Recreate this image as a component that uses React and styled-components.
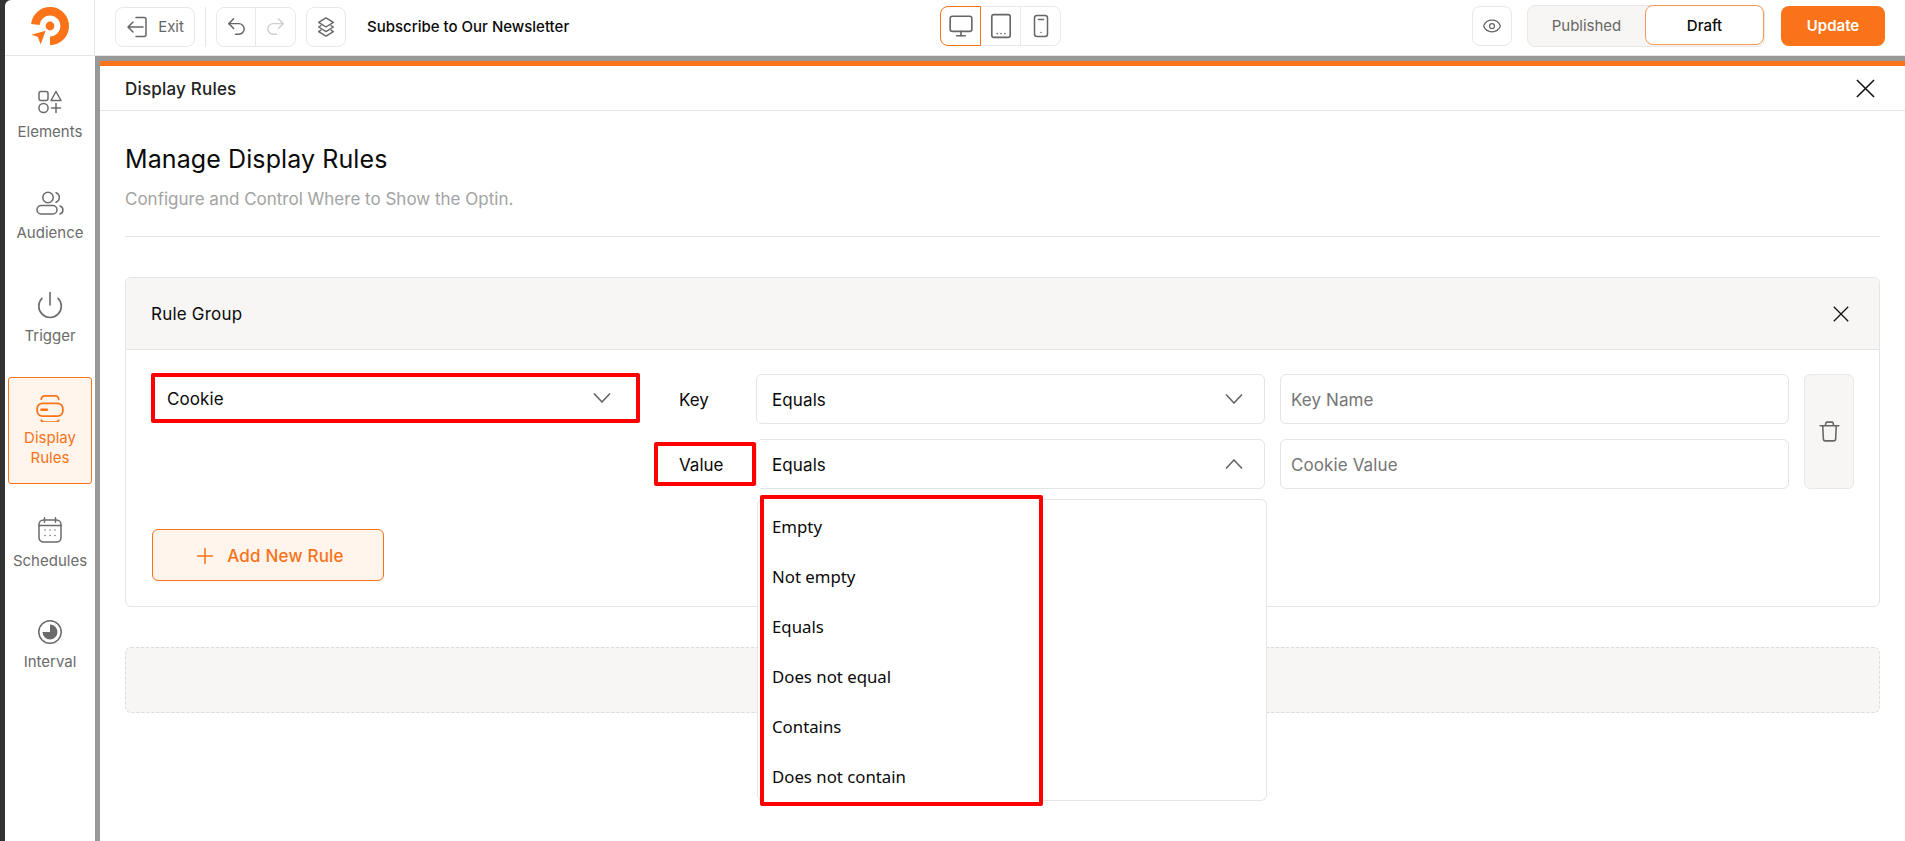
import React from 'react';
import styled, { createGlobalStyle } from 'styled-components';
import { Undo2, Redo2, Monitor, Eye, Power, Plus } from 'lucide-react';

const GlobalStyle = createGlobalStyle`
  html, body { margin: 0; padding: 0; background: #333; }
  body { font-family: Inter, "Liberation Sans", sans-serif; color: #0a0a0a; }
  * { box-sizing: border-box; }
`;

const Shell = styled.div`
  height: 100vh;
  padding-left: 5px;
  background: #333;
  overflow: hidden;
`;

const AppFrame = styled.div`
  height: 100%;
  display: flex;
  flex-direction: column;
  background: #fff;
  border-top-left-radius: 6px;
`;

const Header = styled.header`
  height: 56px;
  flex: none;
  display: flex;
  align-items: flex-start;
  padding-right: 20px;
  border-bottom: 1px solid #e5e5e5;
`;

const LogoCell = styled.div`
  width: 90px;
  height: 55px;
  flex: none;
  display: flex;
  justify-content: center;
  padding-top: 6px;
  border-right: 1px solid #e5e5e5;
`;

const LeftTools = styled.div`
  width: 845px;
  flex: none;
  display: flex;
  align-items: center;
  gap: 10px;
  padding: 6px 0 0 20px;
`;

const ToolButton = styled.button`
  height: 40px;
  width: ${p => p.$width || 40}px;
  display: flex;
  align-items: center;
  justify-content: center;
  gap: 8px;
  padding: 0;
  background: #fff;
  border: 1px solid #e8e8e8;
  border-radius: 8px;
  color: #666;
  font: 400 15px Inter, sans-serif;
`;

const Separator = styled.div`
  width: 1px;
  height: 40px;
  background: #e5e5e5;
`;

const ButtonGroup = styled.div`
  height: 40px;
  display: flex;
  border: 1px solid #e8e8e8;
  border-radius: 8px;
`;

const GroupItem = styled.button`
  width: ${p => p.$width || 39}px;
  display: flex;
  align-items: center;
  justify-content: center;
  padding: 0;
  background: #fff;
  color: ${p => (p.$muted ? '#cfcfcf' : '#666')};
  border: none;
  border-right: 1px solid #e8e8e8;
  border-radius: 0;
  &:last-child { border-right: none; border-radius: 0 8px 8px 0; }
  &:first-child { border-radius: 8px 0 0 8px; }
  ${p => p.$active && `
    margin: -1px 0 -1px -1px;
    width: ${(p.$width || 39) + 2}px;
    border: 1px solid #fa7319;
  `}
`;

const PageTitle = styled.div`
  margin-left: 11px;
  padding-top: 1px;
  font-size: 15px;
  font-weight: 500;
  line-height: 40px;
`;

const DeviceWrap = styled.div`
  padding-top: 6px;
`;

const RightTools = styled.div`
  margin-left: auto;
  display: flex;
  align-items: flex-start;
  padding-top: 6px;
`;

const Segment = styled.div`
  width: 238px;
  height: 42px;
  margin: -1px 0 0 15px;
  display: flex;
  background: #f7f6f4;
  border: 1px solid #e8e8e8;
  border-radius: 8px;
`;

const SegmentItem = styled.div`
  flex: ${p => (p.$active ? '0 0 119px' : '1')};
  height: ${p => (p.$active ? '40px' : 'auto')};
  margin-top: ${p => (p.$active ? '-1px' : '0')};
  display: flex;
  align-items: center;
  justify-content: center;
  padding-bottom: ${p => (p.$active ? 0 : 2)}px;
  font-size: 15px;
  font-weight: ${p => (p.$active ? 500 : 400)};
  color: ${p => (p.$active ? '#0a0a0a' : '#666')};
  background: ${p => (p.$active ? '#fff' : 'transparent')};
  border: ${p => (p.$active ? '1px solid #fa9a56' : 'none')};
  border-radius: 8px;
`;

const UpdateButton = styled.button`
  width: 104px;
  height: 40px;
  margin-left: 16px;
  padding: 0 0 2px;
  background: #fa7319;
  border: none;
  border-radius: 8px;
  color: #fff;
  font: 600 15px Inter, sans-serif;
`;

const Body = styled.div`
  flex: 1;
  min-height: 0;
  display: flex;
`;

const Sidebar = styled.nav`
  width: 90px;
  flex: none;
  display: flex;
  flex-direction: column;
  gap: 17px;
  padding: 18px 3px 0;
`;

const NavItem = styled.div`
  display: flex;
  flex-direction: column;
  align-items: center;
  padding: ${p => (p.$active ? '16px 0 15px' : '16px 0')};
  margin-top: ${p => (p.$active ? '-2px' : '0')};
  text-align: center;
  font-size: 15px;
  line-height: 20px;
  color: ${p => (p.$active ? '#fa7319' : '#6b6b6b')};
  background: ${p => (p.$active ? '#fff5ec' : 'transparent')};
  border: ${p => (p.$active ? '1px solid #fa7319' : 'none')};
  border-radius: 3px;
  svg { display: block; margin-bottom: ${p => (p.$active ? 6 : 8)}px; }
`;

const TriggerIcon = styled(Power)`
  && { margin: -2px 0 6px; }
`;

const Main = styled.main`
  flex: 1;
  min-width: 0;
  padding: 5px 0 0 5px;
  background: #999;
`;

const Modal = styled.section`
  height: 100%;
  background: #fff;
  border-top: 5px solid #fa7319;
`;

const ModalHeader = styled.div`
  height: 45px;
  display: flex;
  align-items: center;
  justify-content: space-between;
  padding: 0 30px 0 25px;
  border-bottom: 1px solid #e5e5e5;
`;

const ModalTitle = styled.div`
  padding-top: 2px;
  font-size: 17px;
  font-weight: 500;
  letter-spacing: 0.2px;
  color: #222;
`;

const CloseButton = styled.span`
  display: flex;
  color: #111;
`;

const Content = styled.div`
  padding: 31px 25px 0;
`;

const Heading = styled.h2`
  margin: 0;
  font-size: 25px;
  font-weight: 400;
  line-height: 34px;
  letter-spacing: 0.1px;
`;

const SubHeading = styled.p`
  margin: 11px 0 0;
  font-size: 17px;
  line-height: 24px;
  color: #a3a3a3;
`;

const Divider = styled.hr`
  margin: 25px 0 40px;
  border: none;
  border-top: 1px solid #e5e5e5;
`;

const RuleGroup = styled.div`
  border: 1px solid #e5e5e5;
  border-radius: 6px;
`;

const GroupHeader = styled.div`
  height: 72px;
  display: flex;
  align-items: center;
  justify-content: space-between;
  padding: 0 30px 0 25px;
  background: #f7f6f4;
  border-bottom: 1px solid #e5e5e5;
  border-radius: 6px 6px 0 0;
  font-size: 17px;
  font-weight: 400;
  letter-spacing: 0.2px;
`;

const GroupBody = styled.div`
  padding: 24px 26px 25px;
`;

const RuleRow = styled.div`
  display: flex;
  align-items: stretch;
`;

const LeftCol = styled.div`
  width: 487px;
  flex: none;
`;

const Conditions = styled.div`
  margin-left: 15px;
  display: flex;
  flex-direction: column;
  gap: 15px;
`;

const ConditionRow = styled.div`
  display: flex;
  align-items: center;
`;

const KeyLabel = styled.div`
  width: 102px;
  flex: none;
  display: flex;
  align-items: center;
  height: ${p => (p.$marked ? 44 : 50)}px;
  margin: ${p => (p.$marked ? '3px 0' : '0')};
  padding: 2px 0 0 ${p => (p.$marked ? 21 : 25)}px;
  border: ${p => (p.$marked ? '4px solid #f00' : 'none')};
  border-radius: 2px;
  font-size: 17px;
  font-weight: 400;
`;

const SelectBox = styled.div`
  position: relative;
  width: ${p => (p.$marked ? 'calc(100% + 2px)' : '509px')};
  height: 50px;
  flex: none;
  display: flex;
  align-items: center;
  justify-content: space-between;
  padding: ${p => (p.$marked ? '0 25px 0 12px' : '0 21px 0 15px')};
  margin: ${p => (p.$marked ? '-1px -1px 0' : '0')};
  background: #fff;
  border: ${p => (p.$marked ? '4px solid #f00' : '1px solid #e5e5e5')};
  border-radius: ${p => (p.$marked ? 2 : 6)}px;
  font-size: 17px;
  font-weight: 400;
  letter-spacing: 0.1px;
  color: #0a0a0a;
  svg { color: #666; }
`;

const SelectValue = styled.span`
  padding-top: 2px;
`;

const TextInput = styled.input`
  width: 509px;
  height: 50px;
  flex: none;
  margin-left: 15px;
  padding: 2px 10px 0;
  background: #fff;
  border: 1px solid #e5e5e5;
  border-radius: 6px;
  font: 400 17px Inter, sans-serif;
  letter-spacing: 0.1px;
  &::placeholder { color: #767676; opacity: 1; }
`;

const DeleteButton = styled.button`
  width: 50px;
  height: 115px;
  flex: none;
  align-self: flex-start;
  margin-left: 15px;
  display: flex;
  align-items: center;
  justify-content: center;
  padding: 0;
  background: #f7f6f4;
  border: 1px solid #e8e8e8;
  border-radius: 6px;
  color: #666;
`;

const OptionMenu = styled.div`
  position: absolute;
  z-index: 5;
  top: 59px;
  left: 0;
  width: 510px;
  height: 302px;
  background: #fff;
  border: 1px solid #e5e5e5;
  border-radius: 6px;
`;

const OptionList = styled.ul`
  width: 283px;
  height: 311px;
  margin: -5px 0 0 2px;
  padding: 2px 0 0;
  list-style: none;
  background: #fff;
  border: 4px solid #f00;
  border-radius: 2px;
`;

const Option = styled.li`
  height: 50px;
  padding-left: 8px;
  display: flex;
  align-items: center;
  font: 400 16.8px "Noto Sans", "Open Sans", sans-serif;
  letter-spacing: 0;
  color: #0a0a0a;
`;

const AddButton = styled.button`
  width: 232px;
  height: 52px;
  margin-top: 106px;
  display: flex;
  align-items: center;
  justify-content: center;
  gap: 9px;
  padding: 2px 0 0;
  background: #fff5ec;
  border: 1px solid #fa7319;
  border-radius: 6px;
  color: #fa7319;
  font: 500 17px Inter, sans-serif;
  letter-spacing: 0.2px;
`;

const DropZone = styled.div`
  height: 66px;
  margin-top: 40px;
  background: #f7f6f4;
  border: 1px dashed #dcdcdc;
  border-radius: 6px;
`;

const Logo = () => (
  <svg width="40" height="40" viewBox="0 0 40 40" fill="none">
    <path d="M20 34.75A14.75 14.75 0 1 0 5.33 18.5" stroke="#fa7319" strokeWidth="8.5" />
    <circle cx="20" cy="20" r="4.4" fill="#fa7319" />
    <path d="M15.7 24.7 1.3 28.7 7.7 30.7 10.7 38.3Z" fill="#fa7319" />
  </svg>
);

const Outline = ({ size = 24, w = 24, h = 24, sw = 1.5, children, ...rest }) => (
  <svg
    width={size * (w / h)}
    height={size}
    viewBox={`0 0 ${w} ${h}`}
    fill="none"
    stroke="currentColor"
    strokeWidth={sw}
    strokeLinecap="round"
    strokeLinejoin="round"
    {...rest}
  >
    {children}
  </svg>
);

const ExitIcon = () => (
  <Outline size={24}>
    <path d="M10 2.5h8a2 2 0 0 1 2 2v15a2 2 0 0 1-2 2h-8M17 12H2M7 7l-5 5 5 5" />
  </Outline>
);

const LayersIcon = () => (
  <Outline size={22}>
    <path d="M12 2l8 5-8 5-8-5z" />
    <path d="M6.5 10.5 4 12l8 5 8-5-2.5-1.5" />
    <path d="M6.5 15.5 4 17l8 5 8-5-2.5-1.5" />
  </Outline>
);

const TabletIcon = () => (
  <Outline size={26}>
    <rect x="3.5" y="1.5" width="17" height="21" rx="2" />
    <path d="M8.5 19h.01M12 19h.01M15.5 19h.01" />
  </Outline>
);

const PhoneIcon = () => (
  <Outline size={24}>
    <rect x="5.5" y="1.5" width="13" height="21" rx="2.5" />
    <path d="M9.5 5.5h5M12 18.5h.01" />
  </Outline>
);

const ElementsIcon = () => (
  <Outline size={24}>
    <rect x="1" y="1.5" width="9" height="9" rx="2" />
    <path d="M18 1.5l5 9H13z" />
    <circle cx="5.5" cy="18" r="4.6" />
    <path d="M18 13.5v9M13.5 18h9" />
  </Outline>
);

const AudienceIcon = () => (
  <Outline size={24} w={28} h={24}>
    <circle cx="12" cy="6.5" r="5.2" />
    <rect x="1" y="14.5" width="20" height="8.5" rx="4.25" />
    <path d="M20 1.8a5 5 0 0 1 0 9.4M24 15a4.2 4.2 0 0 1 0 8" />
  </Outline>
);

const RulesIcon = () => (
  <Outline size={28}>
    <path d="M4.5 4.5a3 3 0 0 1 3-3h9a3 3 0 0 1 3 3" />
    <rect x="1" y="8" width="22" height="11" rx="4.5" />
    <path d="M4.5 13.5h5" strokeWidth="2" />
    <path d="M4.5 22.5a3 3 0 0 0 3 1.5h9a3 3 0 0 0 3-1.5" />
  </Outline>
);

const CalendarIcon = () => (
  <Outline size={26} w={24} h={26}>
    <rect x="1" y="3" width="22" height="22" rx="4.5" />
    <path d="M6.5.8v4.4M17.5.8v4.4M1 8.5h22" />
    <path d="M7 13h.01M12 13h.01M17 13h.01M7 18.5h.01M12 18.5h.01M17 18.5h.01" />
  </Outline>
);

const IntervalIcon = () => (
  <Outline size={24}>
    <circle cx="12" cy="12" r="11.2" />
    <path d="M12 12V4.5A7.5 7.5 0 1 1 4.5 12Z" fill="currentColor" stroke="none" />
  </Outline>
);

const TrashIcon = () => (
  <Outline size={25}>
    <path d="M3 6.5h18M8 6.5l.5-2.6a1 1 0 0 1 1-.9h5a1 1 0 0 1 1 .9l.5 2.6M5.5 6.5l.6 12.5a2 2 0 0 0 2 2h7.8a2 2 0 0 0 2-2l.6-12.5" />
  </Outline>
);

const Cross = ({ size }) => (
  <svg width={size} height={size} viewBox="0 0 20 20" fill="none" stroke="currentColor" strokeWidth="1.6">
    <path d="M1 1l18 18M19 1 1 19" />
  </svg>
);

const Chevron = ({ up }) => (
  <svg width="18" height="10" viewBox="0 0 18 10" fill="none" stroke="currentColor" strokeWidth="1.6">
    <path d={up ? 'M1 9.5 9 1l8 8.5' : 'M1 .5 9 9l8-8.5'} />
  </svg>
);

const options = ['Empty', 'Not empty', 'Equals', 'Does not equal', 'Contains', 'Does not contain'];

export default function App() {
  return (
    <Shell>
      <GlobalStyle />
      <AppFrame>
        <Header>
          <LogoCell>
            <Logo />
          </LogoCell>
          <LeftTools>
            <ToolButton $width={80}>
              <ExitIcon />
              Exit
            </ToolButton>
            <Separator />
            <ButtonGroup>
              <GroupItem>
                <Undo2 size={23} strokeWidth={1.5} />
              </GroupItem>
              <GroupItem $muted>
                <Redo2 size={23} strokeWidth={1.5} />
              </GroupItem>
            </ButtonGroup>
            <ToolButton>
              <LayersIcon />
            </ToolButton>
            <PageTitle>Subscribe to Our Newsletter</PageTitle>
          </LeftTools>
          <DeviceWrap>
            <ButtonGroup>
              <GroupItem $active>
                <Monitor size={26} strokeWidth={1.5} />
              </GroupItem>
              <GroupItem $width={40}>
                <TabletIcon />
              </GroupItem>
              <GroupItem>
                <PhoneIcon />
              </GroupItem>
            </ButtonGroup>
          </DeviceWrap>
          <RightTools>
            <ToolButton>
              <Eye size={20} strokeWidth={1.5} />
            </ToolButton>
            <Segment>
              <SegmentItem>Published</SegmentItem>
              <SegmentItem $active>Draft</SegmentItem>
            </Segment>
            <UpdateButton>Update</UpdateButton>
          </RightTools>
        </Header>
        <Body>
          <Sidebar>
            <NavItem>
              <ElementsIcon />
              Elements
            </NavItem>
            <NavItem>
              <AudienceIcon />
              Audience
            </NavItem>
            <NavItem>
              <TriggerIcon size={30} strokeWidth={1.3} />
              Trigger
            </NavItem>
            <NavItem $active>
              <RulesIcon />
              Display
              <br />
              Rules
            </NavItem>
            <NavItem>
              <CalendarIcon />
              Schedules
            </NavItem>
            <NavItem>
              <IntervalIcon />
              Interval
            </NavItem>
          </Sidebar>
          <Main>
            <Modal>
              <ModalHeader>
                <ModalTitle>Display Rules</ModalTitle>
                <CloseButton>
                  <Cross size={19} />
                </CloseButton>
              </ModalHeader>
              <Content>
                <Heading>Manage Display Rules</Heading>
                <SubHeading>Configure and Control Where to Show the Optin.</SubHeading>
                <Divider />
                <RuleGroup>
                  <GroupHeader>
                    Rule Group
                    <CloseButton>
                      <Cross size={16} />
                    </CloseButton>
                  </GroupHeader>
                  <GroupBody>
                    <RuleRow>
                      <LeftCol>
                        <SelectBox $marked>
                          <SelectValue>Cookie</SelectValue>
                          <Chevron />
                        </SelectBox>
                        <AddButton>
                          <Plus size={26} strokeWidth={1.4} />
                          Add New Rule
                        </AddButton>
                      </LeftCol>
                      <Conditions>
                        <ConditionRow>
                          <KeyLabel>Key</KeyLabel>
                          <SelectBox>
                            <SelectValue>Equals</SelectValue>
                            <Chevron />
                          </SelectBox>
                          <TextInput placeholder="Key Name" />
                        </ConditionRow>
                        <ConditionRow>
                          <KeyLabel $marked>Value</KeyLabel>
                          <SelectBox>
                            <SelectValue>Equals</SelectValue>
                            <Chevron up />
                            <OptionMenu>
                              <OptionList>
                                {options.map(o => (
                                  <Option key={o}>{o}</Option>
                                ))}
                              </OptionList>
                            </OptionMenu>
                          </SelectBox>
                          <TextInput placeholder="Cookie Value" />
                        </ConditionRow>
                      </Conditions>
                      <DeleteButton>
                        <TrashIcon />
                      </DeleteButton>
                    </RuleRow>
                  </GroupBody>
                </RuleGroup>
                <DropZone />
              </Content>
            </Modal>
          </Main>
        </Body>
      </AppFrame>
    </Shell>
  );
}
